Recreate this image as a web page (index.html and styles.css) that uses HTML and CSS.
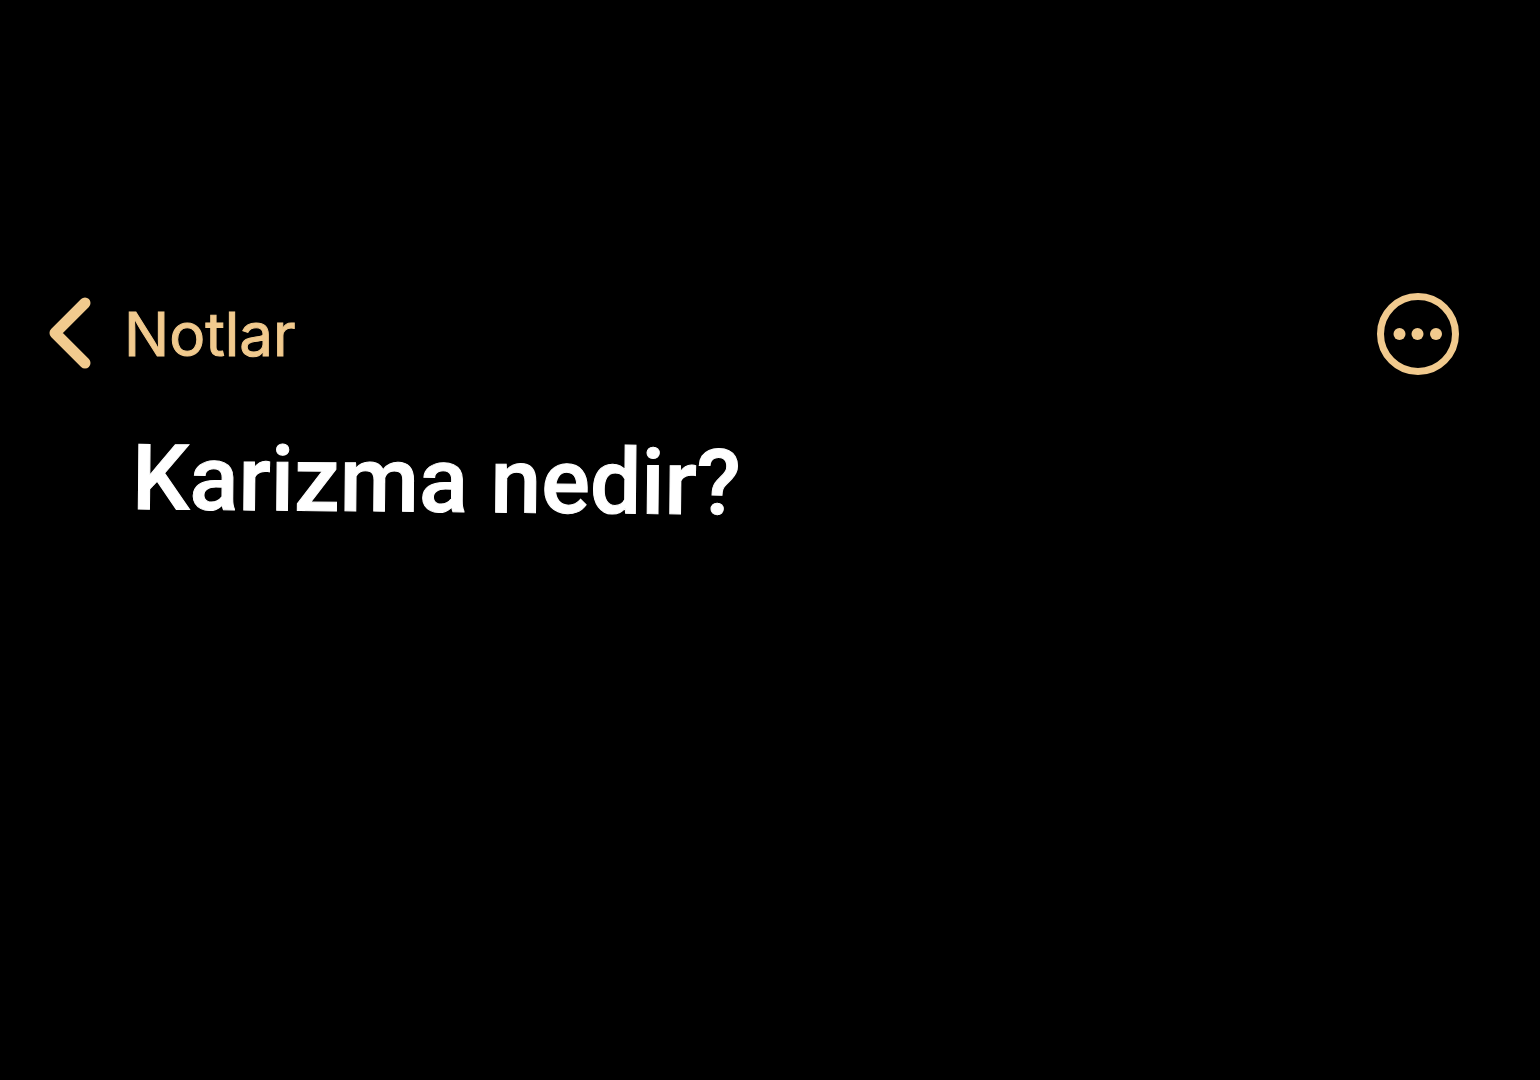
FILE: index.html
```html
<!DOCTYPE html>
<html lang="tr">
<head>
<meta charset="utf-8">
<meta name="viewport" content="width=device-width, initial-scale=1">
<title>Karizma nedir?</title>
<link rel="stylesheet" href="styles.css">
</head>
<body>
<header class="toolbar">
  <a class="back" href="#">
    <svg class="chevron" viewBox="0 0 44 76" aria-hidden="true"><path d="M37 7 L7 37 L37 67"/></svg>
    <span>Notlar</span>
  </a>
  <button class="more" type="button" aria-label="Diğer">
    <svg viewBox="0 0 84 84" aria-hidden="true">
      <circle class="ring" cx="42" cy="42" r="37.5"/>
      <circle cx="23.5" cy="42" r="6"/>
      <circle cx="41.5" cy="42" r="6"/>
      <circle cx="60" cy="42" r="6"/>
    </svg>
  </button>
</header>
<main class="note">
  <h1 class="title">Karizma nedir?</h1>
</main>
</body>
</html>
```
FILE: styles.css
```css
body {
  margin: 0;
  background: #000;
  color: #fff;
  font-family: Inter, "Liberation Sans", sans-serif;
}

.toolbar {
  display: flex;
  align-items: center;
  justify-content: space-between;
  padding: 292px 80px 0 48px;
  color: #f1ca8e;
}

.back {
  display: flex;
  align-items: center;
  gap: 32px;
  color: inherit;
  font-size: 60px;
  line-height: 76px;
  text-decoration: none;
  -webkit-text-stroke: 1px currentColor;
}

.chevron {
  width: 44px;
  height: 76px;
  fill: none;
  stroke: currentColor;
  stroke-width: 11;
  stroke-linecap: round;
  stroke-linejoin: round;
}

.more {
  display: flex;
  padding: 0;
  border: 0;
  background: none;
  color: inherit;
}

.more svg {
  width: 84px;
  height: 84px;
  fill: currentColor;
}

.more .ring {
  fill: none;
  stroke: currentColor;
  stroke-width: 7;
}

.note {
  padding: 46px 132px;
}

.title {
  margin: 0;
  font-family: Roboto, "Liberation Sans", sans-serif;
  font-size: 91px;
  font-weight: 500;
  line-height: 112px;
  -webkit-text-stroke: 1px currentColor;
  transform: rotate(0.5deg);
  transform-origin: left center;
}
```
